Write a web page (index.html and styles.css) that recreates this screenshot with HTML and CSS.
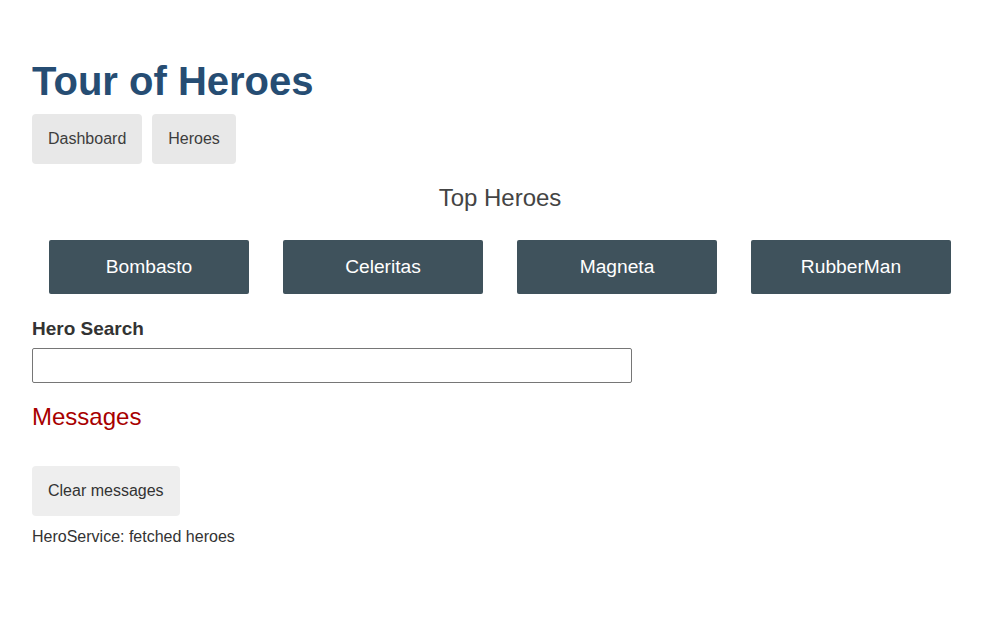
FILE: index.html
```html
<!DOCTYPE html>
<html lang="en">
<head>
<meta charset="utf-8">
<title>Tour of Heroes</title>
<link rel="stylesheet" href="styles.css">
</head>
<body>
<div class="app">
  <h1 class="title">Tour of Heroes</h1>
  <nav class="nav">
    <a class="nav-link" href="#">Dashboard</a>
    <a class="nav-link" href="#">Heroes</a>
  </nav>
  <h2 class="section-title">Top Heroes</h2>
  <div class="heroes-menu">
    <a class="hero-card" href="#">Bombasto</a>
    <a class="hero-card" href="#">Celeritas</a>
    <a class="hero-card" href="#">Magneta</a>
    <a class="hero-card" href="#">RubberMan</a>
  </div>
  <div class="search">
    <label class="search-label" for="search-box">Hero Search</label>
    <input class="search-input" id="search-box" type="text">
  </div>
  <div class="messages">
    <h2 class="messages-title">Messages</h2>
    <button class="clear-btn" type="button">Clear messages</button>
    <div class="message">HeroService: fetched heroes</div>
  </div>
</div>
</body>
</html>
```

FILE: styles.css
```css
* {
  font-family: "Liberation Sans", Arial, Helvetica, sans-serif;
}

html, body {
  margin: 0;
  padding: 0;
  background: #fff;
  color: #333;
}

.app {
  padding: 58px 32px 0;
}

.title {
  margin: 0;
  font-size: 40px;
  line-height: 46px;
  font-weight: bold;
  color: #264d73;
}

.nav {
  display: flex;
  gap: 10px;
  margin-top: 10px;
}

.nav-link {
  display: block;
  padding: 16px;
  font-size: 16px;
  line-height: 18px;
  background: #e8e8e8;
  color: #3d3d3d;
  text-decoration: none;
  border-radius: 4px;
}

.section-title {
  margin: 20px 0 0;
  font-size: 24px;
  line-height: 28px;
  font-weight: normal;
  color: #444;
  text-align: center;
}

.heroes-menu {
  display: flex;
  justify-content: space-around;
  margin-top: 28px;
}

.hero-card {
  display: block;
  box-sizing: border-box;
  width: 200px;
  padding: 16px;
  font-size: 19.2px;
  line-height: 22px;
  background: #3f525c;
  color: #fff;
  text-align: center;
  text-decoration: none;
  border-radius: 2px;
}

.search-label {
  display: block;
  margin-top: 24px;
  font-size: 19px;
  line-height: 22px;
  font-weight: bold;
  color: #333;
}

.search-input {
  display: block;
  box-sizing: border-box;
  width: 600px;
  height: 35px;
  margin: 8px 0 0;
  padding: 8px;
  font-size: 16px;
  border: 1px solid #767676;
  border-radius: 2px;
  background: #fff;
  color: #333;
}

.messages-title {
  margin: 20px 0 0;
  font-size: 24px;
  line-height: 28px;
  font-weight: normal;
  color: #a80000;
}

.clear-btn {
  display: block;
  margin-top: 35px;
  padding: 16px;
  font-size: 16px;
  line-height: 18px;
  background: #eee;
  color: #333;
  border: none;
  border-radius: 4px;
}

.message {
  margin-top: 12px;
  font-size: 16px;
  line-height: 18px;
  color: #333;
}
```
